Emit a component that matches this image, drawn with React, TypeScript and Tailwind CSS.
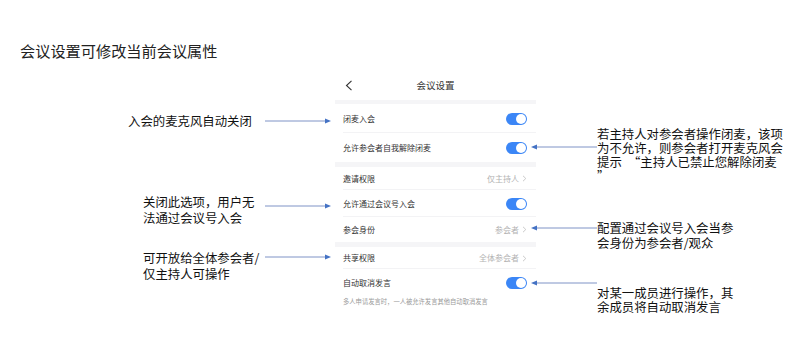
import React from "react";

const FONT = { fontFamily: '"Noto Sans CJK SC", "Noto Sans", sans-serif' };

function Toggle() {
  return (
    <div className="w-[21px] h-[12px] rounded-full bg-[#3b86f6] flex items-center justify-end pr-[1px]">
      <div className="w-[10px] h-[10px] rounded-full bg-white" />
    </div>
  );
}

function Chevron() {
  return (
    <svg width="5" height="7" viewBox="0 0 5 7" className="ml-[3px]">
      <polyline points="1,0.8 3.8,3.5 1,6.2" fill="none" stroke="#c4c4c4" strokeWidth="0.9" />
    </svg>
  );
}

function Row({ label, h, value, toggle, border = true }: { label: string; h: string; value?: string; toggle?: boolean; border?: boolean }) {
  return (
    <div className={`${h} flex items-center pl-[8px] pr-[9px] bg-white relative`}>
      <span className="text-[8px] text-[#333] leading-none flex-1">{label}</span>
      {toggle && <Toggle />}
      {value && (
        <span className="flex items-center text-[8px] text-[#b3b3b3] leading-none">
          {value}
          <Chevron />
        </span>
      )}
      {border && <div className="absolute left-[8px] right-0 bottom-0 h-px bg-[#f3f3f5]" />}
    </div>
  );
}

function ArrowRight({ left, top, width }: { left: number; top: number; width: number }) {
  return (
    <svg className="absolute" style={{ left, top: top - 4 }} width={width} height="8" viewBox={`0 0 ${width} 8`}>
      <line x1="0" y1="4" x2={width - 5} y2="4" stroke="#7f93c6" strokeWidth="1" />
      <polygon points={`${width - 6},1.5 ${width},4 ${width - 6},6.5`} fill="#4472c4" />
    </svg>
  );
}

function ArrowLeft({ left, top, width }: { left: number; top: number; width: number }) {
  return (
    <svg className="absolute" style={{ left, top: top - 4 }} width={width} height="8" viewBox={`0 0 ${width} 8`}>
      <line x1="5" y1="4" x2={width} y2="4" stroke="#7f93c6" strokeWidth="1" />
      <polygon points="6,1.5 0,4 6,6.5" fill="#4472c4" />
    </svg>
  );
}

export default function App() {
  return (
    <div className="relative w-[798px] h-[349px] bg-white overflow-hidden text-[#111]" style={FONT}>
      <div className="pt-[42px] pl-[20px] text-[15.2px] leading-[16px] text-[#222]">会议设置可修改当前会议属性</div>

      <div className="ml-[335px] mt-[14px] w-[201px]">
        <div className="h-[28px] relative flex items-center justify-center bg-white">
          <svg className="absolute left-[10px] top-[8px]" width="8" height="11" viewBox="0 0 8 11">
            <polyline points="6.5,0.8 1.5,5.5 6.5,10.2" fill="none" stroke="#333" strokeWidth="1.1" />
          </svg>
          <span className="text-[9.5px] text-[#333] leading-none">会议设置</span>
        </div>
        <div className="h-[4px] bg-[#f5f5f7]" />
        <Row label="闭麦入会" h="h-[29px]" toggle />
        <Row label="允许参会者自我解除闭麦" h="h-[29px]" toggle border={false} />
        <div className="h-[5px] bg-[#f5f5f7]" />
        <Row label="邀请权限" h="h-[23px]" value="仅主持人" />
        <Row label="允许通过会议号入会" h="h-[27px]" toggle />
        <Row label="参会身份" h="h-[25px]" value="参会者" border={false} />
        <div className="h-[5px] bg-[#f5f5f7]" />
        <Row label="共享权限" h="h-[22px]" value="全体参会者" />
        <Row label="自动取消发言" h="h-[27px]" toggle border={false} />
        <div className="pl-[8px] pt-[2px] text-[6.3px] leading-[8px] text-[#9a9a9a] bg-white">多人申请发言时，一人被允许发言其他自动取消发言</div>
      </div>

      {/* left callouts */}
      <div className="absolute left-[128px] top-[113px] text-[12.4px] leading-[16px] whitespace-nowrap">入会的麦克风自动关闭</div>
      <ArrowRight left={265} top={121} width={66} />

      <div className="absolute left-[143px] top-[194px] text-[12.4px] leading-[16px] whitespace-pre">
        {"关闭此选项，用户无\n法通过会议号入会"}
      </div>
      <ArrowRight left={265} top={206} width={66} />

      <div className="absolute left-[143px] top-[250px] text-[12.4px] leading-[16px] whitespace-pre">
        {"可开放给全体参会者/\n仅主持人可操作"}
      </div>
      <ArrowRight left={265} top={257} width={66} />

      {/* right callouts */}
      <ArrowLeft left={531} top={147} width={66} />
      <div className="absolute left-[597px] top-[127px] text-[12.4px] leading-[14px] whitespace-pre">
        {"若主持人对参会者操作闭麦，该项\n为不允许，则参会者打开麦克风会\n提示　“主持人已禁止您解除闭麦\n”"}
      </div>

      <ArrowLeft left={531} top={228} width={66} />
      <div className="absolute left-[597px] top-[221px] text-[12.4px] leading-[15px] whitespace-pre">
        {"配置通过会议号入会当参\n会身份为参会者/观众"}
      </div>

      <ArrowLeft left={531} top={283} width={66} />
      <div className="absolute left-[597px] top-[286px] text-[12.4px] leading-[14px] whitespace-pre">
        {"对某一成员进行操作，其\n余成员将自动取消发言"}
      </div>
    </div>
  );
}
